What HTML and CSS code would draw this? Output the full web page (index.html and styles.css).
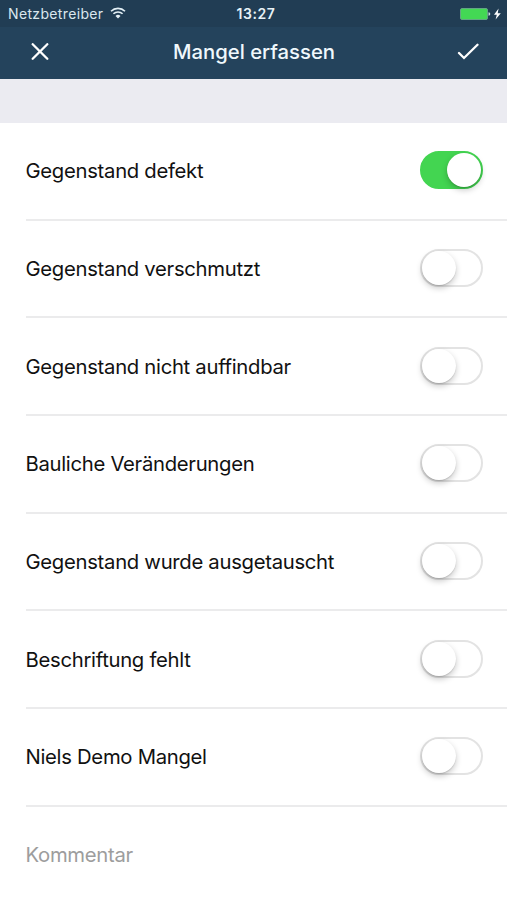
FILE: index.html
```html
<!DOCTYPE html>
<html lang="de">
<head>
  <meta charset="UTF-8" />
  <meta name="viewport" content="width=device-width, initial-scale=1.0" />
  <title>Mangel erfassen</title>
  <link rel="stylesheet" href="styles.css">
</head>
<body>

  <header class="header">
    <div class="statusbar">
      <div class="carrier">
        <span class="carrier-name">Netzbetreiber</span>
        <svg class="wifi" width="16" height="12" viewBox="0 0 16 12">
          <path d="M1 4.2a10 10 0 0 1 14 0M3.4 6.8a6.6 6.6 0 0 1 9.2 0" fill="none" stroke="#e4f0f6" stroke-width="1.6" />
          <path d="M5.5 8.9a3.6 3.6 0 0 1 5 0L8 11.5z" fill="#e4f0f6" />
        </svg>
      </div>
      <span class="clock">13:27</span>
      <div class="power">
        <svg width="42" height="14" viewBox="0 0 42 14">
          <rect x="0.5" y="1.5" width="27" height="11" rx="1.5" fill="#43d854" stroke="#62a583" stroke-width="1" />
          <path d="M28.5 5.2a1.8 1.8 0 0 1 0 3.6z" fill="#c5dcdc" />
          <path d="M38.6 1.5L34 7.8H36.8L35.6 12.5L40.8 6.2H37.7z" fill="#fff" />
        </svg>
      </div>
    </div>
    <div class="navbar">
      <button class="nav-btn" aria-label="Abbrechen">
        <svg width="18" height="18" viewBox="0 0 18 18"><path d="M1.7 1.2l14.6 14.6M16.3 1.2L1.7 15.8" /></svg>
      </button>
      <h1>Mangel erfassen</h1>
      <button class="nav-btn" aria-label="Speichern">
        <svg width="22" height="18" viewBox="0 0 22 18"><path d="M2 10l5 5L20.5 1.7" /></svg>
      </button>
    </div>
  </header>

  <main class="list">
    <label class="row"><span>Gegenstand defekt</span><input type="checkbox" class="switch" checked /></label>
    <label class="row"><span>Gegenstand verschmutzt</span><input type="checkbox" class="switch" /></label>
    <label class="row"><span>Gegenstand nicht auffindbar</span><input type="checkbox" class="switch" /></label>
    <label class="row"><span>Bauliche Veränderungen</span><input type="checkbox" class="switch" /></label>
    <label class="row"><span>Gegenstand wurde ausgetauscht</span><input type="checkbox" class="switch" /></label>
    <label class="row"><span>Beschriftung fehlt</span><input type="checkbox" class="switch" /></label>
    <label class="row"><span>Niels Demo Mangel</span><input type="checkbox" class="switch" /></label>
    <div class="comment">Kommentar</div>
  </main>

</body>
</html>
```
FILE: styles.css
```css
:root {
  --navy: #24435c;
  --green: #43d551;
  --line: #ebebec;
}

* {
  box-sizing: border-box;
}

body {
  margin: 0;
  height: 900px;
  overflow: hidden;
  font-family: Inter, "Liberation Sans", sans-serif;
  background: #fff;
  color: #111;
}

.header {
  height: 79px;
  background: var(--navy);
  color: #fff;
}

.statusbar {
  height: 27px;
  padding: 0 5px 0 8px;
  display: grid;
  grid-template-columns: 1fr auto 1fr;
  align-items: center;
  background: #213d54;
  font-size: 14px;
}

.carrier {
  display: flex;
  align-items: center;
  gap: 7px;
  color: #dbe7ee;
  letter-spacing: 0.35px;
}

.wifi {
  margin-top: -2px;
}

.clock {
  padding-left: 2px;
  font-weight: 600;
  letter-spacing: 0.6px;
  color: #e8f2f7;
}

.power {
  display: flex;
  justify-content: flex-end;
}

.navbar {
  height: 52px;
  padding: 0 28px 3px 31px;
  display: flex;
  align-items: center;
  justify-content: space-between;
}

h1 {
  margin: 0;
  padding: 0 0 0 2px;
  font-size: 20.3px;
  font-weight: 500;
  color: #f0f8fc;
}

.nav-btn {
  display: flex;
  padding: 0;
  border: none;
  background: none;
}

.nav-btn svg {
  fill: none;
  stroke: #fff;
  stroke-width: 2.3;
  stroke-linecap: round;
}

.list {
  border-top: 44px solid #ebebf1;
}

.row {
  height: 97.7px;
  margin-left: 26px;
  padding: 0 24px 0 0;
  display: flex;
  align-items: center;
  justify-content: space-between;
  border-bottom: 2px solid var(--line);
  font-size: 20.3px;
  letter-spacing: -0.3px;
}

.row span {
  margin-left: -0.5px;
}

.switch {
  appearance: none;
  width: 63px;
  height: 38px;
  margin: 0 0 1px;
  display: flex;
  border: 2px solid #e3e3e3;
  border-radius: 19px;
}

.switch::before {
  content: "";
  width: 34px;
  height: 34px;
  border-radius: 50%;
  background: #fff;
  box-shadow: 0 3px 6px rgba(0,0,0,0.22), 0 1px 1px rgba(0,0,0,0.12);
}

.switch:checked {
  justify-content: flex-end;
  border-color: var(--green);
  background: var(--green);
}

.comment {
  padding: 35px 0;
  margin-left: 25.5px;
  color: #9d9d9d;
  font-size: 20.3px;
  letter-spacing: -0.3px;
}
```
